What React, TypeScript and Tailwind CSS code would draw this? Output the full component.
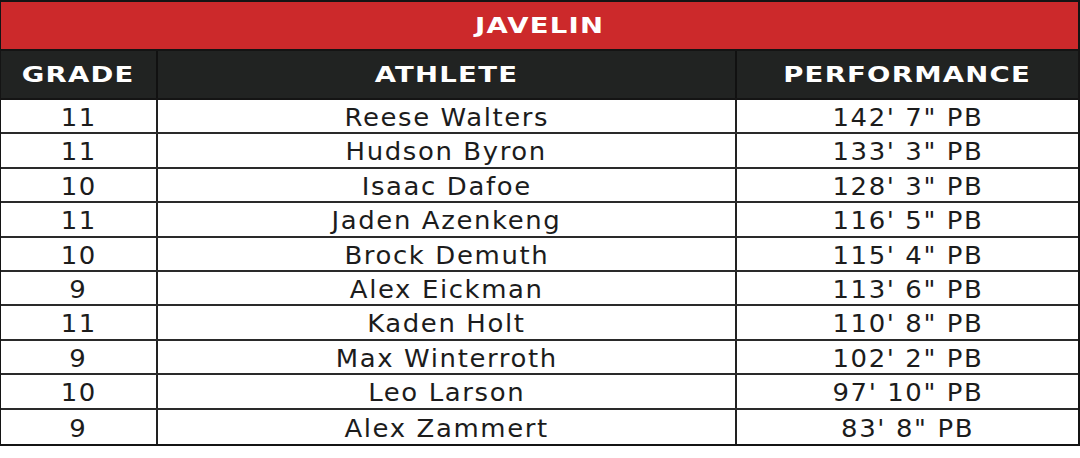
import React from "react";

const rows: [string, string, string][] = [
  ["11", "Reese Walters", "142' 7\" PB"],
  ["11", "Hudson Byron", "133' 3\" PB"],
  ["10", "Isaac Dafoe", "128' 3\" PB"],
  ["11", "Jaden Azenkeng", "116' 5\" PB"],
  ["10", "Brock Demuth", "115' 4\" PB"],
  ["9", "Alex Eickman", "113' 6\" PB"],
  ["11", "Kaden Holt", "110' 8\" PB"],
  ["9", "Max Winterroth", "102' 2\" PB"],
  ["10", "Leo Larson", "97' 10\" PB"],
  ["9", "Alex Zammert", "83' 8\" PB"],
];

const head = "font-['DejaVu_Sans',sans-serif] font-bold text-[22px] tracking-[1px] text-white scale-x-[1.25] inline-block leading-none";
const cell = "font-['DejaVu_Sans',sans-serif] text-[24px] tracking-[1.5px] text-[#1c1c1c] scale-x-[1.08] inline-block leading-none";

export default function App() {
  return (
    <div className="w-[1080px] h-[458px] bg-white">
      <div className="w-[1080px] border-t-2 border-l border-r-2 border-b-2 border-[#141414] bg-white">
        <div className="h-[49px] bg-[#cc292b] border-b-2 border-[#141414] flex items-center justify-center">
          <span className={head}>JAVELIN</span>
        </div>
        <div className="grid grid-cols-[157px_579px_1fr] h-[49px] bg-[#212322] border-b-2 border-[#141414]">
          <div className="flex items-center justify-center border-r-2 border-[#111]">
            <span className={head}>GRADE</span>
          </div>
          <div className="flex items-center justify-center border-r-2 border-[#111]">
            <span className={head}>ATHLETE</span>
          </div>
          <div className="flex items-center justify-center">
            <span className={head}>PERFORMANCE</span>
          </div>
        </div>
        {rows.map((r, i) => (
          <div
            key={i}
            className={
              "grid grid-cols-[157px_579px_1fr] " +
              (i % 5 === 1 || i % 5 === 3 ? "h-[35px] " : "h-[34px] ") +
              (i < rows.length - 1 ? "border-b-2 border-[#2a2a2a]" : "")
            }
          >
            <div className="flex items-center justify-center pt-[3px] border-r-2 border-[#222]">
              <span className={cell}>{r[0]}</span>
            </div>
            <div className="flex items-center justify-center pt-[3px] border-r-2 border-[#222]">
              <span className={cell}>{r[1]}</span>
            </div>
            <div className="flex items-center justify-center pt-[3px]">
              <span className={cell}>{r[2]}</span>
            </div>
          </div>
        ))}
      </div>
    </div>
  );
}
